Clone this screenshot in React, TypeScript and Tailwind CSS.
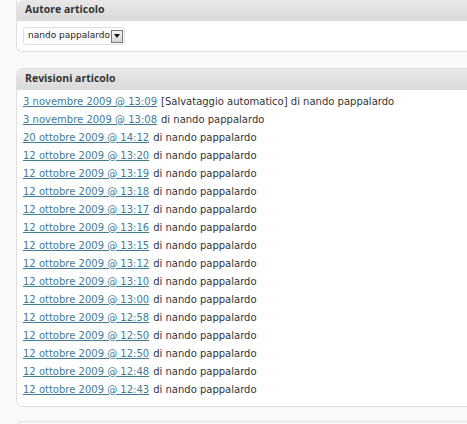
const REVISIONS: { date: string; auto?: boolean }[] = [
  { date: '3 novembre 2009 @ 13:09', auto: true },
  { date: '3 novembre 2009 @ 13:08' },
  { date: '20 ottobre 2009 @ 14:12' },
  { date: '12 ottobre 2009 @ 13:20' },
  { date: '12 ottobre 2009 @ 13:19' },
  { date: '12 ottobre 2009 @ 13:18' },
  { date: '12 ottobre 2009 @ 13:17' },
  { date: '12 ottobre 2009 @ 13:16' },
  { date: '12 ottobre 2009 @ 13:15' },
  { date: '12 ottobre 2009 @ 13:12' },
  { date: '12 ottobre 2009 @ 13:10' },
  { date: '12 ottobre 2009 @ 13:00' },
  { date: '12 ottobre 2009 @ 12:58' },
  { date: '12 ottobre 2009 @ 12:50' },
  { date: '12 ottobre 2009 @ 12:50' },
  { date: '12 ottobre 2009 @ 12:48' },
  { date: '12 ottobre 2009 @ 12:43' },
];

function PanelHeader({ title }: { title: string }) {
  return (
    <div
      className="h-[21px] flex items-center pl-[8px] rounded-t-[6px] bg-gradient-to-b from-[#e8e8e8] to-[#dadada] border-b border-[#dcdcdc] text-[10.5px] font-bold text-[#333]"
      style={{ fontFamily: '"Open Sans", sans-serif' }}
    >
      {title}
    </div>
  );
}

export default function App() {
  return (
    <div
      className="w-[467px] h-[424px] overflow-hidden bg-[#f9f9f9] pl-[16px]"
      style={{ fontFamily: '"DejaVu Sans", Verdana, sans-serif' }}
    >
      {/* Autore articolo */}
      <div className="w-[470px] rounded-b-[6px] border border-t-0 border-[#dfdfdf] bg-white">
        <PanelHeader title="Autore articolo" />
        <div className="h-[30px] flex items-center pl-[6px]">
          <div className="flex items-center h-[18px] pl-[4px] pr-[1px] border border-[#dfdfdf] rounded-[3px] bg-white text-[9px] text-[#222]">
            <span>nando pappalardo</span>
            <span className="ml-[1px] w-[12px] h-[13px] flex items-center justify-center border border-[#777] bg-gradient-to-b from-[#f4f4f4] to-[#d8d8d8]">
              <svg width="6" height="4" viewBox="0 0 6 4">
                <path d="M0 0h6L3 4z" fill="#111" />
              </svg>
            </span>
          </div>
        </div>
      </div>

      {/* Revisioni articolo */}
      <div className="mt-[16px] w-[470px] rounded-[6px] border border-[#dfdfdf] bg-white">
        <PanelHeader title="Revisioni articolo" />
        <ul className="pt-[2px] pb-[8px] pl-[6px] text-[10px] text-[#333]">
          {REVISIONS.map((r, i) => (
            <li key={i} className="h-[18px] flex items-center whitespace-nowrap">
              <a href="#" className="text-[#437c94] underline">
                {r.date}
              </a>
              <span className="ml-[4px]">
                {r.auto ? '[Salvataggio automatico] di nando pappalardo' : 'di nando pappalardo'}
              </span>
            </li>
          ))}
        </ul>
      </div>

      <div className="mt-[14px] w-[470px] h-[20px] rounded-t-[6px] border border-[#e4e4e4] bg-[#f7f7f7]" />
    </div>
  );
}
